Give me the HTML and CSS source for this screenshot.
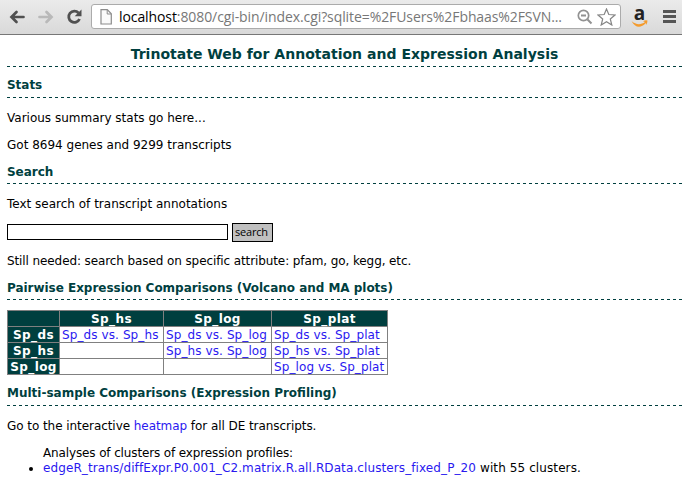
FILE: index.html
```html
<!DOCTYPE html>
<html lang="en">
<head>
<meta charset="utf-8">
<title>Trinotate Web</title>
<link rel="stylesheet" href="styles.css">
</head>
<body>
<header class="toolbar">
  <svg class="back" width="16" height="14" viewBox="0 0 16 14"><path d="M14.500 7H3M7.500 2L2.500 7L7.500 12" fill="none" stroke="#505050" stroke-width="2.700" stroke-linecap="round"/></svg>
  <svg class="forward" width="16" height="14" viewBox="0 0 16 14"><path d="M1.500 7H13M8.500 2L13.500 7L8.500 12" fill="none" stroke="#b9b9b9" stroke-width="2.700" stroke-linecap="round"/></svg>
  <svg class="reload" width="17" height="16" viewBox="0 0 17 16"><path d="M12.500 4A5.600 5.600 0 1 0 13.500 10" fill="none" stroke="#505050" stroke-width="2.800"/><path d="M15.500 0.500V7.300H8.700Z" fill="#505050"/></svg>
  <div class="address">
    <svg class="page-icon" width="12" height="16" viewBox="0 0 12 16"><path d="M1 .7H7.300L11.300 4.800V15H1Z" fill="#fafafa" stroke="#8c8c8c" stroke-width="1.200"/><path d="M7.200 1V5H11" fill="none" stroke="#8c8c8c"/></svg>
    <span class="url"><b>localhost</b>:8080/cgi-bin/index.cgi?sqlite=%2FUsers%2Fbhaas%2FSVN...</span>
    <svg class="lens" width="16" height="16" viewBox="0 0 16 16"><circle cx="6.500" cy="6.500" r="5.200" fill="none" stroke="#929292" stroke-width="1.700"/><path d="M4 6.500H9M10.500 10.500L14.500 14.500" stroke="#929292" stroke-width="2"/></svg>
    <svg class="star" width="19" height="18" viewBox="0 0 19 18"><path d="M9.500 1L11.800 6.500L18 7L13.300 11L14.800 17L9.500 13.800L4.200 17L5.700 11L1 7L7.200 6.500Z" fill="#fff" stroke="#858585" stroke-width="1.200"/></svg>
  </div>
  <div class="amazon"><span>a</span><svg width="17" height="8" viewBox="0 0 17 8"><path d="M0.500 1C5 5 10 5 14 2L12 1.200Q14 0 16.500 .5Q16.500 3 15 5L14.800 3C10 8.500 4 8 .5 1Z" fill="#f49b2d"/></svg></div>
  <svg class="menu" width="13" height="13" viewBox="0 0 13 13"><path d="M0 1.500H13M0 6.500H13M0 11.500H13" stroke="#555" stroke-width="2.800"/></svg>
</header>
<main>
  <h1>Trinotate Web for Annotation and Expression Analysis</h1>
  <h2 class="first">Stats</h2>
  <p>Various summary stats go here...</p>
  <p class="last">Got 8694 genes and 9299 transcripts</p>
  <h2 class="search">Search</h2>
  <p class="lead">Text search of transcript annotations</p>
  <form><input type="text" aria-label="Search"><button type="button">search</button></form>
  <p class="note last">Still needed: search based on specific attribute: pfam, go, kegg, etc.</p>
  <h2 class="pairwise">Pairwise Expression Comparisons (Volcano and MA plots)</h2>
  <table>
    <colgroup><col class="c1"><col class="c2"><col class="c3"><col class="c4"></colgroup>
    <tr><th></th><th>Sp_hs</th><th>Sp_log</th><th>Sp_plat</th></tr>
    <tr><th>Sp_ds</th><td><a>Sp_ds vs. Sp_hs</a></td><td><a>Sp_ds vs. Sp_log</a></td><td><a>Sp_ds vs. Sp_plat</a></td></tr>
    <tr><th>Sp_hs</th><td></td><td><a>Sp_hs vs. Sp_log</a></td><td><a>Sp_hs vs. Sp_plat</a></td></tr>
    <tr><th>Sp_log</th><td></td><td></td><td><a>Sp_log vs. Sp_plat</a></td></tr>
  </table>
  <h2 class="multi">Multi-sample Comparisons (Expression Profiling)</h2>
  <p class="heat">Go to the interactive <a>heatmap</a> for all DE transcripts.</p>
  <ul>Analyses of clusters of expression profiles:
    <li><a>edgeR_trans/diffExpr.P0.001_C2.matrix.R.all.RData.clusters_fixed_P_20</a> with 55 clusters.</li>
  </ul>
</main>
</body>
</html>
```
FILE: styles.css
```css
* { box-sizing: border-box; }
body { margin: 0; background: #fff; color: #000; font: 12px/15px "DejaVu Sans", Verdana, sans-serif; overflow: hidden; }
.toolbar { height: 35px; display: flex; align-items: center; background: linear-gradient(#ebebeb, #d9d9d9); border-bottom: 1px solid #777; padding: 0 5px 1px 9px; }
.toolbar svg { flex: none; display: block; }
.forward { margin-left: 13px; }
.reload { margin-left: 12px; }
.address { margin-left: 8px; width: 530px; height: 25px; flex: none; display: flex; align-items: center; background: #fff; border: 1px solid #ababab; border-radius: 3px; padding: 0 4px 0 8px; }
.url { font: 14px/22px "Open Sans", sans-serif; letter-spacing: -0.09px; color: #777; margin-left: 7px; white-space: nowrap; width: 446px; flex: none; }
.url b { font-weight: 400; color: #000; }
.lens { margin-left: 12px; }
.star { margin-left: 4px; }
.amazon { margin-left: 10px; width: 17px; height: 20px; display: flex; flex-direction: column; align-items: center; }
.amazon span { font: bold 19px/13px "Open Sans", sans-serif; color: #222; height: 13px; }
.menu { margin-left: 15px; }
main { padding: 9px 0 0 7px; }
h1, h2 { color: #003f3f; margin: 0; font-weight: 700; background: repeating-linear-gradient(90deg, #003f3f 0 3px, transparent 3px 6px) 0 100% / 100% 1px no-repeat; white-space: nowrap; }
h1 { font-size: 14px; line-height: 20px; height: 23px; text-align: center; margin-bottom: 10px; letter-spacing: 0.02px; }
h2 { font-size: 12px; height: 20px; line-height: 16px; margin-bottom: 13px; letter-spacing: -0.03px; }
h2.first { height: 21px; }
h2.pairwise { margin-bottom: 10px; }
h2.multi { height: 21px; letter-spacing: 0; }
p { margin: 0 0 12px; white-space: nowrap; }
p.last { margin-bottom: 11px; }
p.lead { margin-bottom: 11px; }
.note { letter-spacing: -0.1px; }
.heat { letter-spacing: -0.06px; }
form { display: flex; align-items: center; gap: 4px; height: 19px; margin-bottom: 12px; }
input { width: 221px; height: 16px; border: 1px solid #000; padding: 0; margin: 0 0 1px; }
button { width: 41px; height: 19px; border: 1px solid #000; background: #c0c0c0; padding: 0 6px 2px 2px; font: 11px/15px "Open Sans", sans-serif; letter-spacing: -0.2px; color: #000; text-align: left; }
table { border-collapse: collapse; table-layout: fixed; width: 381px; height: 65px; margin-bottom: 10px; }
.c1 { width: 52px; } .c2 { width: 104px; } .c3 { width: 108px; } .c4 { width: 116px; }
th, td { height: 16px; border: 1px solid #808080; padding: 1px 2px 0; line-height: 14px; white-space: nowrap; }
th { background: #003f3f; color: #fff; padding: 1px 0 0; letter-spacing: 0.4px; }
td { text-align: left; letter-spacing: 0.1px; }
a { color: #2a18f0; }
ul { margin: 0; padding-left: 36px; white-space: nowrap; letter-spacing: -0.13px; }
li { letter-spacing: 0.1px; }
```
